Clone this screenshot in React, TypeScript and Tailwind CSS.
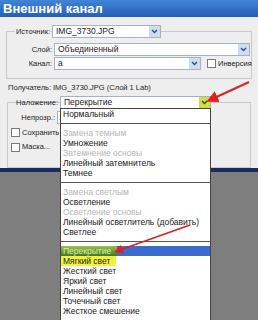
import React from "react";

const Chevron = ({ color = "#2a4a8a" }: { color?: string }) => (
  <svg width="7" height="5" viewBox="0 0 7 5">
    <path d="M1 1 L3.5 3.5 L6 1" fill="none" stroke={color} strokeWidth="1.3" />
  </svg>
);

const Select = ({
  value,
  width,
  hot,
}: {
  value: string;
  width: string;
  hot?: boolean;
}) => (
  <div
    className={`${width} h-[13px] shrink-0 flex items-stretch bg-white border border-[#a7b3c4] text-[#222] text-[8.5px]`}
  >
    <div className="flex-1 pl-[3px] leading-[11px] whitespace-nowrap overflow-hidden">{value}</div>
    <div
      className={`w-[11px] flex items-center justify-center ${
        hot ? "bg-[#c9e04a]" : "bg-[#cfdcee]"
      }`}
    >
      <Chevron color={hot ? "#3a4a10" : "#2a4a8a"} />
    </div>
  </div>
);

const Check = () => (
  <div className="w-[9px] h-[9px] shrink-0 bg-white border border-[#7a7a7a]" />
);

type Item = { t: string; dim?: boolean; sel?: boolean; mark?: boolean } | "sep";

const items: Item[] = [
  { t: "Нормальный" },
  "sep",
  { t: "Замена темным", dim: true },
  { t: "Умножение" },
  { t: "Затемнение основы", dim: true },
  { t: "Линейный затемнитель" },
  { t: "Темнее" },
  "sep",
  { t: "Замена светлым", dim: true },
  { t: "Осветление" },
  { t: "Осветление основы", dim: true },
  { t: "Линейный осветлитель (добавить)" },
  { t: "Светлее" },
  "sep",
  { t: "Перекрытие", sel: true },
  { t: "Мягкий свет", mark: true },
  { t: "Жесткий свет" },
  { t: "Яркий свет" },
  { t: "Линейный свет" },
  { t: "Точечный свет" },
  { t: "Жесткое смешение" },
];

export default function App() {
  return (
    <div className="relative w-[258px] h-[320px] overflow-hidden bg-[#7e7e7e] font-['Liberation_Sans',sans-serif] text-[7.5px] text-[#222]">
      {/* dialog */}
      <div className="h-[168px] bg-[#eeeeee] flex flex-col">
        <div className="h-[17px] bg-gradient-to-b from-[#4384d6] to-[#235fb6] flex items-center pl-[3px]">
          <span className="text-white font-bold text-[13px] leading-none">Внешний канал</span>
        </div>

        {/* source group */}
        <div className="mx-[6px] mt-[14px] h-[48px] border border-[#c9c9c9] flex flex-col">
          <div className="-mt-[7px] flex items-center">
            <div className="w-[45px] shrink-0 flex justify-end pr-[2px]">
              <span className="bg-[#eeeeee] pl-[1px] whitespace-nowrap">Источник:</span>
            </div>
            <Select value="IMG_3730.JPG" width="w-[109px]" />
          </div>
          <div className="mt-[5px] flex items-center">
            <div className="w-[47px] shrink-0 text-right pr-[2px]">Слой:</div>
            <Select value="Объединенный" width="w-[196px]" />
          </div>
          <div className="mt-[1px] flex items-center">
            <div className="w-[47px] shrink-0 text-right pr-[2px]">Канал:</div>
            <Select value="a" width="w-[147px]" />
            <div className="ml-[6px] flex items-center gap-[2px]">
              <Check />
              <span>Инверсия</span>
            </div>
          </div>
        </div>

        <div className="mt-[3px] ml-[8px] flex whitespace-nowrap">
          <span className="w-[45px] shrink-0">Получатель:</span>
          <span>IMG_3730.JPG (Слой 1 Lab)</span>
        </div>

        {/* blend group */}
        <div className="ml-[7px] mr-[7px] mt-[9px] h-[66px] border border-[#c9c9c9] flex flex-col">
          <div className="-mt-[7px] flex items-center">
            <div className="w-[52px] shrink-0 text-right pr-[2px] whitespace-nowrap">Наложение:</div>
            <Select value="Перекрытие" width="w-[151px]" hot />
          </div>
          <div className="mt-[2px] flex items-center">
            <div className="w-[49px] shrink-0 text-right pr-[2px] whitespace-nowrap">Непрозр.:</div>
            <div className="w-[40px] h-[13px] bg-white border border-[#a7b3c4] pl-[1px] leading-[11px] text-[8.5px]">1</div>
          </div>
          <div className="mt-[3px] ml-[3px] flex items-center gap-[2px]">
            <Check />
            <span>Сохранить</span>
          </div>
          <div className="mt-[3px] ml-[3px] flex items-center gap-[2px]">
            <Check />
            <span>Маска...</span>
          </div>
        </div>
      </div>
      <div className="h-[4px] bg-[#1d2a5c]" />

      {/* open dropdown list */}
      <div className="absolute left-[60px] top-[108px] w-[151px] h-[215px] bg-white border border-[#444] flex flex-col text-[8.5px]">
        {items.map((it, i) =>
          it === "sep" ? (
            <div key={i} className="h-[9px] flex items-center">
              <div className="w-full h-[1px] bg-[#555]" />
            </div>
          ) : (
            <div
              key={i}
              className={`h-[10px] leading-[10px] whitespace-nowrap ${
                it.sel ? "bg-[#3a6cd0]" : ""
              } ${it.dim ? "text-[#b5b5b5]" : "text-[#222]"}`}
            >
              <span
                className={`px-[2px] inline-block ${
                  it.sel ? "bg-gradient-to-b from-[#9cc04a] to-[#3d7a25] text-[#d8f0a0] pr-[6px]" : ""
                } ${it.mark ? "bg-[#f2f23c] pr-[6px]" : ""}`}
              >
                {it.t}
              </span>
            </div>
          )
        )}
      </div>

      {/* red arrows */}
      <svg className="absolute left-0 top-0" width="258" height="320">
        <defs>
          <marker id="ah" markerWidth="6" markerHeight="6" refX="4" refY="3" orient="auto">
            <path d="M0 0 L6 3 L0 6 Z" fill="#e02020" />
          </marker>
        </defs>
        <line x1="249" y1="82" x2="210" y2="100" stroke="#e02020" strokeWidth="2" markerEnd="url(#ah)" />
        <line x1="190" y1="225" x2="117" y2="251" stroke="#d82020" strokeWidth="1.5" markerEnd="url(#ah)" />
      </svg>
    </div>
  );
}
